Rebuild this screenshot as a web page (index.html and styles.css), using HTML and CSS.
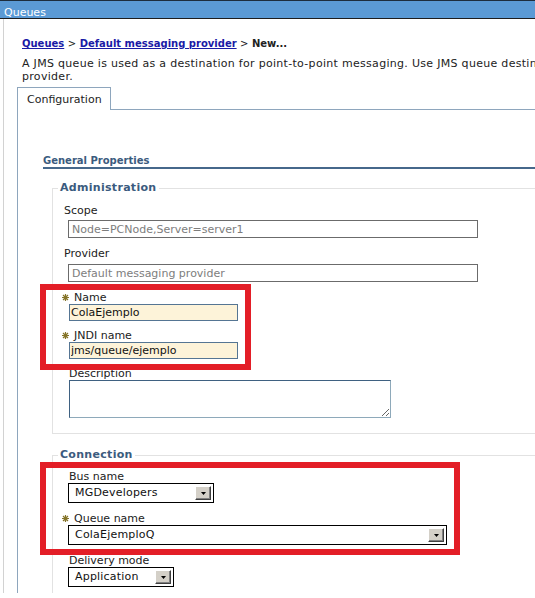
FILE: index.html
```html
<!DOCTYPE html>
<html lang="en">
<head>
    <meta charset="UTF-8">
    <meta name="viewport" content="width=device-width, initial-scale=1.0">
    <title>Queues</title>
    <link rel="stylesheet" href="styles.css">
</head>
<body>
<div class="screen">
    <div class="titlebar">Queues</div>

    <div class="page">
        <div class="intro">
            <div class="crumbs">
                <a href="#">Queues</a> <span class="sep">&gt;</span> <a href="#">Default messaging provider</a> <span class="sep">&gt;</span> New...
            </div>
            <p class="desc">A JMS queue is used as a destination for point-to-point messaging. Use JMS queue destination administrative objects to manage JMS queues for the default messaging<br>provider.</p>
        </div>

        <div class="tabbar">
            <div class="tab">Configuration</div>
            <div class="tabfill"></div>
        </div>

        <div class="panel">
            <h3 class="section">General Properties</h3>

            <fieldset class="group">
                <legend>Administration</legend>
                <div class="fields">
                    <div class="field ro">
                        <label>Scope</label>
                        <input class="text wide" type="text" value="Node=PCNode,Server=server1" readonly>
                    </div>
                    <div class="field ro">
                        <label>Provider</label>
                        <input class="text wide" type="text" value="Default messaging provider" readonly>
                    </div>
                    <div class="field req">
                        <label><span class="star"><svg width="7" height="7" viewBox="0 0 7 7"><path d="M3.5 0V7M0 3.5H7M1 1L6 6M6 1L1 6" stroke="#857428" stroke-width="1.2"/></svg></span>Name</label>
                        <input class="text edit" type="text" value="ColaEjemplo">
                    </div>
                    <div class="field req tight">
                        <label><span class="star"><svg width="7" height="7" viewBox="0 0 7 7"><path d="M3.5 0V7M0 3.5H7M1 1L6 6M6 1L1 6" stroke="#857428" stroke-width="1.2"/></svg></span>JNDI name</label>
                        <input class="text edit" type="text" value="jms/queue/ejemplo">
                    </div>
                    <div class="field tight">
                        <label>Description</label>
                        <textarea class="area"></textarea>
                    </div>
                </div>
            </fieldset>

            <fieldset class="group conn">
                <legend>Connection</legend>
                <div class="fields">
                    <div class="field first">
                        <label>Bus name</label>
                        <div class="select bus"><span class="val">MGDevelopers</span><span class="drop"><svg width="5" height="3" viewBox="0 0 5 3"><path d="M0 0H5L2.5 3Z" fill="#000"/></svg></span></div>
                    </div>
                    <div class="field req">
                        <label><span class="star"><svg width="7" height="7" viewBox="0 0 7 7"><path d="M3.5 0V7M0 3.5H7M1 1L6 6M6 1L1 6" stroke="#857428" stroke-width="1.2"/></svg></span>Queue name</label>
                        <div class="select queue"><span class="val">ColaEjemploQ</span><span class="drop"><svg width="5" height="3" viewBox="0 0 5 3"><path d="M0 0H5L2.5 3Z" fill="#000"/></svg></span></div>
                    </div>
                    <div class="field">
                        <label>Delivery mode</label>
                        <div class="select mode"><span class="val">Application</span><span class="drop"><svg width="5" height="3" viewBox="0 0 5 3"><path d="M0 0H5L2.5 3Z" fill="#000"/></svg></span></div>
                    </div>
                </div>
            </fieldset>
        </div>
    </div>

    <!-- red annotation boxes drawn over the form -->
    <div class="mark mark-a"></div>
    <div class="mark mark-b"></div>
</div>
</body>
</html>
```

FILE: styles.css
```css
html, body {
    margin: 0;
    overflow: hidden;
    background: #fff;
}
body {
    font-family: "DejaVu Sans", Verdana, sans-serif;
    font-size: 11px;
    color: #222;
}
.screen {
    position: relative;
    height: 593px;
    overflow: hidden;
}

.titlebar {
    height: 13px;
    padding: 5px 0 0 4px;
    line-height: 13px;
    background: #5b9ad5;
    color: #fff;
    border-top: 1px solid #1d2d3d;
    border-bottom: 1px solid #1e1e1e;
    box-sizing: content-box;
    max-height: 12px;
    overflow: hidden;
}

.page {
    width: 900px;
    margin-left: 3px;
    padding: 18px 0 0 13px;
    border-left: 1px solid #d2d2d2;
}
.intro {
    padding-left: 5px;
}
.crumbs {
    font-size: 10px;
    font-weight: bold;
    line-height: 13px;
    color: #222;
}
.crumbs a {
    color: #1a1aa6;
}
.crumbs .sep {
    font-weight: normal;
}
.desc {
    margin: 7px 0 0;
    line-height: 13px;
    white-space: nowrap;
    letter-spacing: 0.3px;
}

.tabbar {
    display: flex;
    margin-top: 4px;
}
.tab {
    padding: 5px 8px 4px 9px;
    line-height: 13px;
    border: 1px solid #8ea6bd;
    border-bottom: 0;
}
.tabfill {
    flex: 1;
    border-bottom: 1px solid #8ea6bd;
}

.panel {
    padding: 45px 0 0 25px;
    border-left: 1px solid #8ea6bd;
}
.section {
    margin: 0;
    font-size: 10px;
    line-height: 12px;
    color: #3b5b7e;
    border-bottom: 2px solid #46688b;
}

.group {
    margin: 12px 0 0 9px;
    padding: 0 0 15px 0;
    border: 1px solid #e2e2e2;
}
.group.conn {
    margin-top: 14px;
}
.group legend {
    margin-left: 5px;
    padding: 0 2px;
    font-size: 11px;
    font-weight: bold;
    line-height: 14px;
    color: #3b5b7e;
    letter-spacing: 0.3px;
}
.fields {
    padding-left: 16px;
}

.field {
    margin-top: 10px;
}
.field.tight,
.field.first {
    margin-top: 9px;
}
.field label {
    display: block;
    line-height: 12px;
}
.field.ro label {
    margin: 0 0 3px -5px;
}
.field.ro + .field.ro label {
    margin-bottom: 4px;
}
.field.req label {
    margin-left: -7px;
}
.star {
    display: inline-block;
    width: 12px;
}
.star svg {
    display: block;
    margin-top: 2px;
}

.text {
    display: block;
    box-sizing: border-box;
    margin: 0;
    font: inherit;
    outline: none;
}
.text.wide {
    width: 410px;
    height: 18px;
    margin-left: -1px;
    padding: 0 3px;
    border: 1px solid #6b6b6b;
    color: #7d7d7d;
    background: #fff;
}
.text.edit {
    width: 169px;
    height: 17px;
    padding: 0 1px;
    border: 1px solid #557593;
    color: #111;
    background: #fdf3d9;
}
.area {
    display: block;
    box-sizing: border-box;
    width: 322px;
    height: 38px;
    margin: 0;
    border: 1px solid;
    border-color: #3f6181 #8ea9ba #8ea9ba #3f6181;
    font: inherit;
}

.select {
    display: flex;
    align-items: center;
    box-sizing: border-box;
    height: 20px;
    margin-left: -1px;
    border: 1px solid #000;
    background: #fff;
    color: #111;
}
.select.bus { width: 146px; }
.select.queue { width: 379px; }
.select.mode { width: 106px; }
.select .val {
    flex: 1;
    padding-left: 6px;
    line-height: 18px;
    letter-spacing: 0.2px;
}
.drop {
    display: flex;
    align-items: center;
    justify-content: center;
    box-sizing: border-box;
    width: 16px;
    height: 14px;
    margin-right: 2px;
    background: #d4d0c8;
    border: 1px solid;
    border-color: #fff #404040 #404040 #fff;
    box-shadow: inset -1px -1px 0 #808080;
}

.mark {
    position: absolute;
    box-sizing: border-box;
    border: 6px solid #e31e27;
}
.mark-a {
    left: 40px;
    top: 284px;
    width: 211px;
    height: 86px;
}
.mark-b {
    left: 40px;
    top: 462px;
    width: 420px;
    height: 93px;
}
```
